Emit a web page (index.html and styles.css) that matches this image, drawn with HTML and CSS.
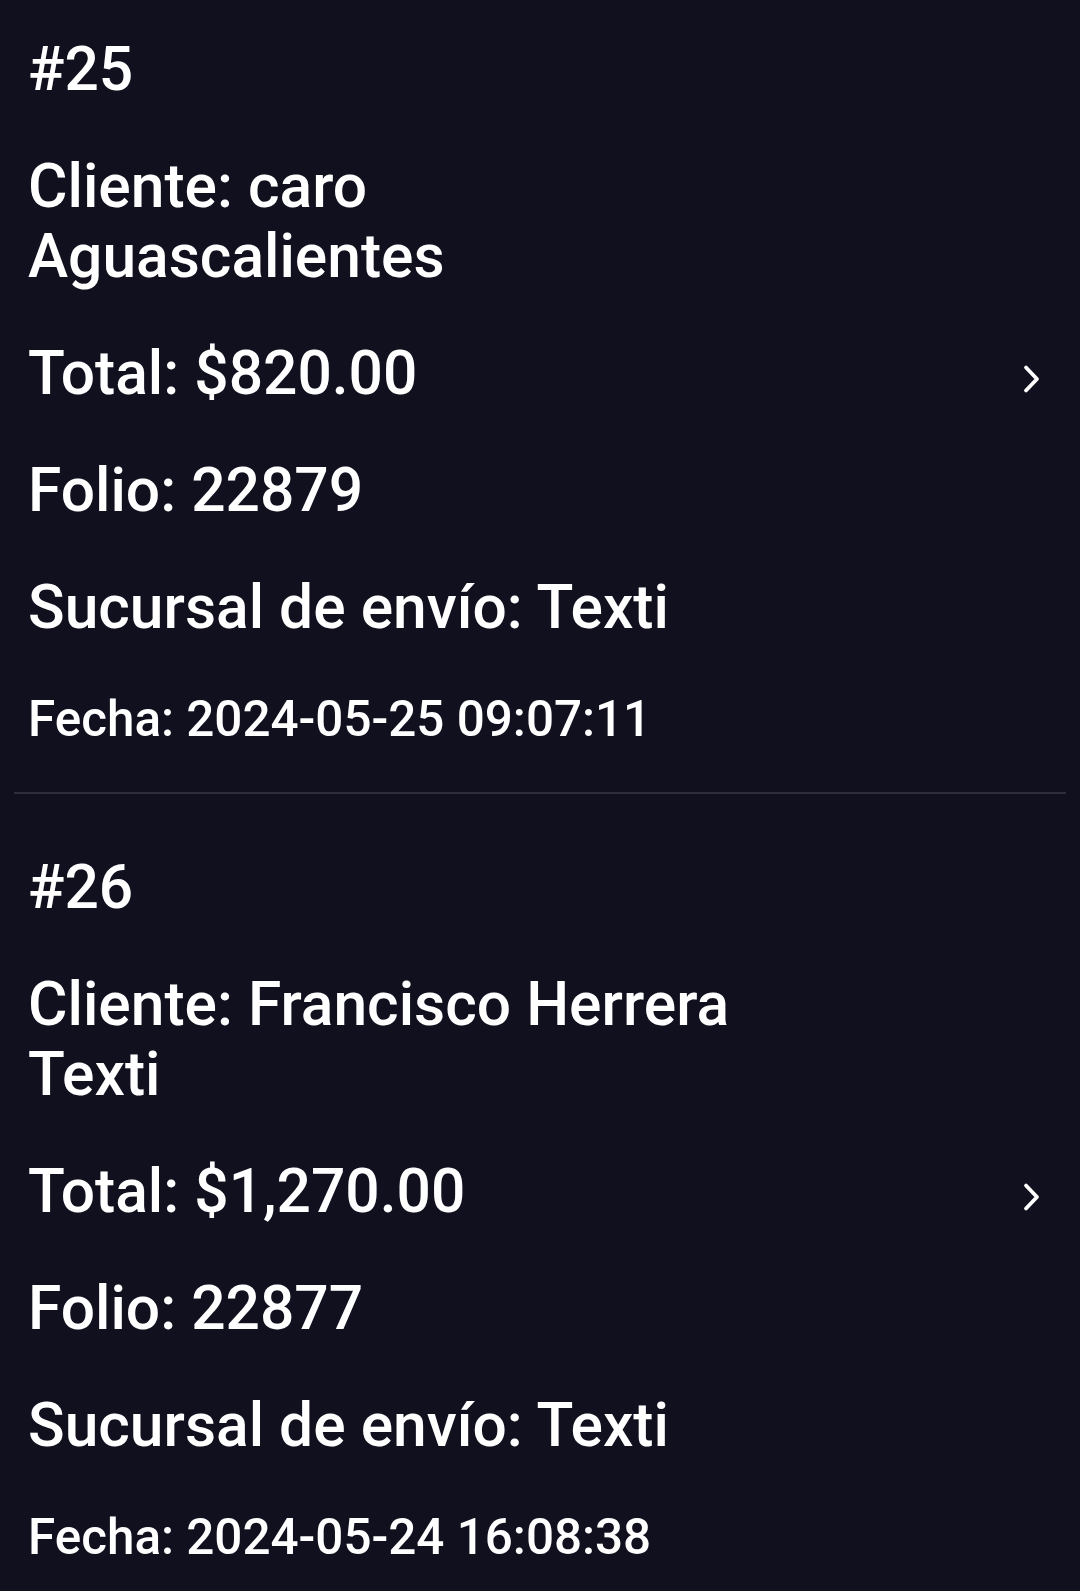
FILE: index.html
```html
<!DOCTYPE html>
<html lang="es">
<head>
<meta charset="utf-8">
<title>Pedidos</title>
<link rel="stylesheet" href="styles.css">
</head>
<body>
<main class="orders">
  <section class="order">
    <p class="line">#25</p>
    <p class="line">Cliente: caro<br>Aguascalientes</p>
    <div class="line row">
      <span>Total: $820.00</span>
      <svg class="chev" width="20" height="30" viewBox="0 0 20 30" aria-hidden="true"><polyline points="4,3.5 15,15 4,26.5" fill="none" stroke="#ffffff" stroke-width="3.8" stroke-linecap="round" stroke-linejoin="round"/></svg>
    </div>
    <p class="line">Folio: 22879</p>
    <p class="line">Sucursal de envío: Texti</p>
    <p class="line date">Fecha: 2024-05-25 09:07:11</p>
  </section>
  <hr class="divider">
  <section class="order">
    <p class="line">#26</p>
    <p class="line">Cliente: Francisco Herrera<br>Texti</p>
    <div class="line row">
      <span>Total: $1,270.00</span>
      <svg class="chev" width="20" height="30" viewBox="0 0 20 30" aria-hidden="true"><polyline points="4,3.5 15,15 4,26.5" fill="none" stroke="#ffffff" stroke-width="3.8" stroke-linecap="round" stroke-linejoin="round"/></svg>
    </div>
    <p class="line">Folio: 22877</p>
    <p class="line">Sucursal de envío: Texti</p>
    <p class="line date">Fecha: 2024-05-24 16:08:38</p>
  </section>
</main>
</body>
</html>
```
FILE: styles.css
```css
html, body {
  margin: 0;
  padding: 0;
  background: #11101f;
}
body {
  font-family: Roboto, "Noto Sans", sans-serif;
  color: #ffffff;
  width: 1080px;
  min-height: 1591px;
}
.orders {
  display: flex;
  flex-direction: column;
}
.order {
  display: flex;
  flex-direction: column;
  gap: 47px;
  padding: 59px 38px 43px 28px;
}
.order:first-child {
  padding-top: 35px;
}
.line {
  margin: 0;
  font-size: 60.5px;
  line-height: 70px;
  font-weight: 500;
}
.row {
  display: flex;
  align-items: center;
  justify-content: space-between;
}
.chev {
  display: block;
  flex: none;
  margin-top: 9px;
}
.date {
  font-size: 49.4px;
  line-height: 59px;
}
.divider {
  margin: 0 14px;
  border: 0;
  height: 2px;
  background: #2e2d3d;
}
```
